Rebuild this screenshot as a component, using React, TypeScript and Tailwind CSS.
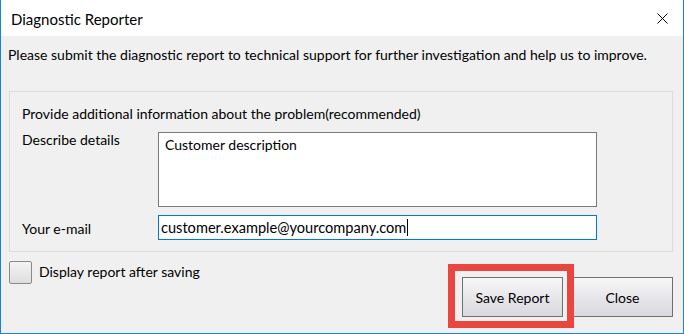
import React from "react";

const font = { fontFamily: "Lato, 'Noto Sans', sans-serif" };

export default function App() {
  return (
    <div
      className="relative w-[684px] h-[334px] flex flex-col bg-[#f0f0f0] border-l border-r border-b border-[#1883d7] text-black overflow-hidden"
      style={font}
    >
      {/* Title bar */}
      <div className="h-[36px] bg-white flex items-center justify-between pl-[10px] pr-[15px] shrink-0">
        <span className="text-[15px] leading-[20px] mt-[1px]">Diagnostic Reporter</span>
        <svg width="11" height="11" viewBox="0 0 11 11" className="mt-[1px]">
          <path d="M0.5 0.5 L10.5 10.5 M10.5 0.5 L0.5 10.5" stroke="#000" strokeWidth="1" fill="none" />
        </svg>
      </div>

      {/* Message */}
      <div className="mt-[9px] pl-[7px] text-[14px] leading-[20px] whitespace-nowrap">
        Please submit the diagnostic report to technical support for further investigation and help us to improve.
      </div>

      {/* Group box */}
      <div className="mt-[26px] ml-[8px] w-[664px] border border-[#dcdcdc] pt-[12px] pl-[12px] pb-[11px] text-[14px]">
        <div className="leading-[20px]">Provide additional information about the problem(recommended)</div>
        <div className="flex items-start mt-[6px]">
          <div className="w-[136px] leading-[20px]">Describe details</div>
          <div className="mt-[2px] w-[439px] h-[75px] bg-white border border-[#7a7a7a] pl-[6px] pt-[2px] leading-[20px]">
            Customer description
          </div>
        </div>
        <div className="flex items-center mt-[8px]">
          <div className="w-[136px] leading-[20px] mt-[2px]">Your e-mail</div>
          <div className="w-[439px] h-[25px] bg-white border border-[#0078d7] pl-[2px] flex items-center leading-[20px]">
            <span className="text-[14.6px]">customer.example@yourcompany.com</span>
            <span className="w-[1px] h-[17px] bg-black ml-[1px]" />
          </div>
        </div>
      </div>

      {/* Bottom row */}
      <div className="flex justify-between pl-[8px] pr-[10px] mt-[9px]">
        <div className="flex items-start">
          <div className="w-[23px] h-[23px] rounded-[2px] border border-[#8a8a8a] bg-gradient-to-b from-[#f4f4f4] to-[#dedede]" />
          <span className="ml-[7px] text-[14px] leading-[20px] mt-[1px]">Display report after saving</span>
        </div>
        <div className="flex gap-[9px] mt-[16px]">
          <button className="w-[101px] h-[40px] border border-[#707070] bg-gradient-to-b from-[#f7f7f7] to-[#d8d8de] text-[14px]">
            Save Report
          </button>
          <button className="w-[101px] h-[40px] border border-[#707070] bg-gradient-to-b from-[#f7f7f7] to-[#d8d8de] text-[14px]">
            Close
          </button>
        </div>
      </div>

      {/* Red highlight annotation */}
      <div className="absolute left-[447px] top-[264px] w-[126px] h-[64px] border-[7px] border-[#e8463f]" />
    </div>
  );
}
